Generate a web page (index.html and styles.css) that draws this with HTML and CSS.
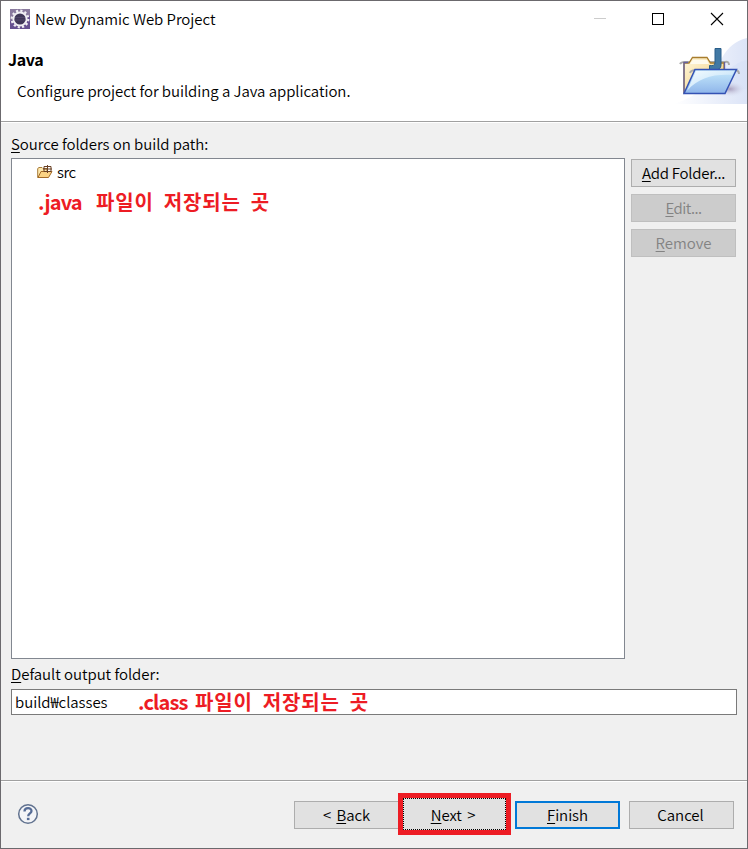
FILE: index.html
```html
<!DOCTYPE html>
<html lang="en">
<head>
<meta charset="utf-8">
<title>New Dynamic Web Project</title>
<link rel="stylesheet" href="styles.css">
</head>
<body>
<div class="window">
  <header class="banner">
    <div class="titlebar">
      <svg class="app-icon" width="20" height="20" viewBox="0 0 20 20">
        <rect width="20" height="20" fill="#66508f"/>
        <path d="M0 0H20V7L0 12Z" fill="#8a7a9e"/>
        <circle cx="10" cy="10" r="8.300" fill="none" stroke="#f1eff3" stroke-width="2.200" stroke-dasharray="2.200 2.150"/>
        <circle cx="10" cy="10" r="6.600" fill="#403757" stroke="#f1eff3" stroke-width="2"/>
        <path d="M5 8.500H15M4.500 11H15.500" stroke="#514669" stroke-width="1"/>
      </svg>
      <span class="title">New Dynamic Web Project</span>
      <svg class="controls" width="130" height="14" viewBox="0 0 130 14">
        <path d="M0 6.500H12" stroke="#ccc"/>
        <rect x="58.500" y="1.500" width="11" height="11" fill="none" stroke="#000"/>
        <path d="M117 1L129 13M129 1L117 13" stroke="#000" stroke-width="1.100"/>
      </svg>
    </div>
    <div class="heading">
      <div>
        <h1>Java</h1>
        <p class="description">Configure project for building a Java application.</p>
      </div>
      <svg class="folder-art" width="74" height="66" viewBox="-1 0 74 66">
        <defs>
          <linearGradient id="haze" x1="0" x2="1"><stop offset="0" stop-color="#fff"/><stop offset="1" stop-color="#dce4f7"/></linearGradient>
          <linearGradient id="blue" x1="0" y1="0" x2="0" y2="1"><stop offset="0" stop-color="#c9ecfc"/><stop offset="1" stop-color="#8eb5ea"/></linearGradient>
          <linearGradient id="shine" x1="0" y1="0" x2="1" y2="1"><stop offset="0" stop-color="#f4fcff"/><stop offset="1" stop-color="#b4daf7"/></linearGradient>
          <linearGradient id="gold" x1="0" y1="0" x2="1" y2="1"><stop offset="0" stop-color="#fff8df"/><stop offset="1" stop-color="#f2c96f"/></linearGradient>
          <radialGradient id="shadow"><stop offset="0" stop-color="#aaa0bd"/><stop offset="1" stop-color="#dce4f7" stop-opacity="0"/></radialGradient>
        </defs>
        <path d="M73 0C48 6 47 28 31 48C22 58 10 62 0 66H73Z" fill="url(#haze)"/>
        <path d="M73 22C55 26 48 42 34 48L40 55L73 51Z" fill="#d6e0f6" opacity=".55"/>
        <ellipse cx="56" cy="51" rx="16" ry="8" fill="url(#shadow)"/>
        <path d="M6 26Q7 24 11 24H51Q55 23 55 27" fill="none" stroke="#aaa" stroke-width="2"/>
        <path d="M10 55V25H15L18.500 19.500H33L36.500 25H50V54Z" fill="url(#gold)" stroke="#a87d2d" stroke-width="1.300"/>
        <path d="M10 55V24.500H14M50.500 24V34" fill="none" stroke="#65619f" stroke-width="1.300"/>
        <path d="M19 22H33L35 26H16Z" fill="#fffbed"/>
        <path d="M41 10.500H47V27Q47 32 41 32H35.500V27.500Q41 28.500 41 24.500Z" fill="#4279a4" stroke="#285d89"/>
        <path d="M16 35Q17 32 22 32H60Q65 32 65 36" fill="none" stroke="#aaa" stroke-width="2"/>
        <path d="M10 55.500L21 31.500H62.500L51 55.500Z" fill="url(#blue)" stroke="#3452b4" stroke-width="1.500"/>
        <path d="M13 53L22 33H60L58 37C39 36 24 40 13 53Z" fill="url(#shine)"/>
      </svg>
    </div>
  </header>
  <main class="content">
    <div class="label source"><u>S</u>ource folders on build path:</div>
    <div class="folders">
      <div class="list">
        <div class="item">
          <svg width="16" height="14" viewBox="0 0 16 14">
            <path d="M.7 12.500V3.500L2 2.500H5L6 3.500H10V12.500Z" fill="#ffe9ad" stroke="#a77a38"/>
            <path d="M1 12.500L4 6.500H15L11.500 12.500Z" fill="#fbd384" stroke="#a46b27"/>
            <path d="M7 1.500H14V6.500H7ZM6 4H15M10.500 0V8" fill="none" stroke="#694024"/>
          </svg>
          <span class="src">src</span>
        </div>
        <div class="note"><span class="java">.java</span><span class="korean" lang="ko">파일이 저장되는 곳</span></div>
      </div>
      <div class="actions">
        <button class="add"><span><u>A</u>dd Folder...</span></button>
        <button class="edit" disabled><span><u>E</u>dit...</span></button>
        <button disabled><span><u>R</u>emove</span></button>
      </div>
    </div>
    <div class="label output"><u>D</u>efault output folder:</div>
    <div class="field"><span class="path">build₩classes</span><div class="note"><span class="class">.class</span><span class="korean" lang="ko">파일이 저장되는 곳</span></div></div>
  </main>
  <footer class="footer">
    <svg class="help" width="22" height="22" viewBox="0 0 22 22">
      <circle cx="11" cy="11" r="9.300" fill="#f3f4f7" stroke="#61728f" stroke-width="1.500"/>
      <path d="M7.500 8.500C7.500 3.700 14.700 4.200 14.500 8C14.400 10.500 11.200 10.300 11.200 13.200" fill="none" stroke="#566c96" stroke-width="2.300"/>
      <rect x="9.900" y="14.800" width="2.600" height="2.300" fill="#566c96"/>
    </svg>
    <button class="back"><span>&lt; <u>B</u>ack</span></button>
    <button class="next"><span><u>N</u>ext &gt;</span></button>
    <button class="finish"><span><u>F</u>inish</span></button>
    <button class="cancel"><span>Cancel</span></button>
  </footer>
</div>
</body>
</html>
```

FILE: styles.css
```css
* { box-sizing: border-box; }
body { margin: 0; font-family: "Noto Sans CJK JP", "Noto Sans CJK KR", sans-serif; font-size: 15px; font-weight: 350; line-height: 24px; letter-spacing: -.05px; color: #000; }
.window { width: 748px; height: 849px; border: 1px solid #6b696d; background: #f0f0f0; display: flex; flex-direction: column; overflow: hidden; }
u { text-decoration-thickness: 1px; text-underline-offset: 2px; text-decoration-skip-ink: none; }
.banner { height: 121px; background: #fff; border-bottom: 1px solid #a0a0a0; }
.titlebar { height: 36px; display: flex; align-items: center; padding: 0 23px 0 9px; }
.title { margin-left: 5px; }
.controls { margin-left: auto; }
.heading { display: flex; justify-content: space-between; }
h1 { margin: 10px 0 0 7px; font-size: 16px; line-height: 24px; font-weight: 700; letter-spacing: -.35px; }
.description { margin: 8px 0 0 16px; }
.folder-art { margin-top: 1px; }
.content { height: 658px; padding: 9px 10px 0; border-top: 1px solid #fff; }
.label { height: 24px; }
.source { margin-bottom: 2px; }
.folders { display: flex; gap: 6px; }
.list { width: 614px; height: 501px; border: 1px solid #828790; background: #fff; }
.item { display: flex; align-items: center; height: 26px; padding-left: 25px; gap: 4px; }
.src { letter-spacing: -.5px; }
.note { color: #ed1c24; font-weight: 700; font-size: 20px; line-height: 30px; display: flex; letter-spacing: -.85px; }
.korean { font-family: "Noto Sans CJK KR", sans-serif; letter-spacing: .85px; word-spacing: 3.5px; }
.list .note { padding: 2px 0 0 26px; }
.java { width: 58px; }
.class { width: 57px; }
.actions { display: flex; flex-direction: column; gap: 7px; padding-top: 1px; }
button { width: 105px; height: 28px; margin: 0; padding: 0; border: 1px solid #adadad; background: #e1e1e1; font: inherit; letter-spacing: inherit; color: #000; white-space: nowrap; display: flex; align-items: center; justify-content: center; }
button:disabled { background: #ccc; border-color: #bfbfbf; color: #838383; }
.add { letter-spacing: -.25px; }
.edit { letter-spacing: -.5px; }
.output { margin: 3px 0; }
.field { width: 726px; height: 26px; border: 1px solid #7a7a7a; background: #fff; display: flex; align-items: center; padding-left: 3px; }
.path { width: 123px; }
.footer { height: 68px; border-top: 1px solid #a0a0a0; box-shadow: inset 0 1px #fff; display: flex; padding: 20px 13px 0 16px; }
.help { margin: 2px auto 0 0; }
.back, .next { word-spacing: 2px; }
.next { width: 113px; height: 42px; margin: -8px 4px 0 -1px; padding: 2px 3px 0 0; border: 5px solid #ed1c24; outline: 1px dotted #000; outline-offset: -6px; }
.finish { border: 2px solid #0078d7; margin-right: 9px; }
.cancel { padding-right: 2px; }
```
